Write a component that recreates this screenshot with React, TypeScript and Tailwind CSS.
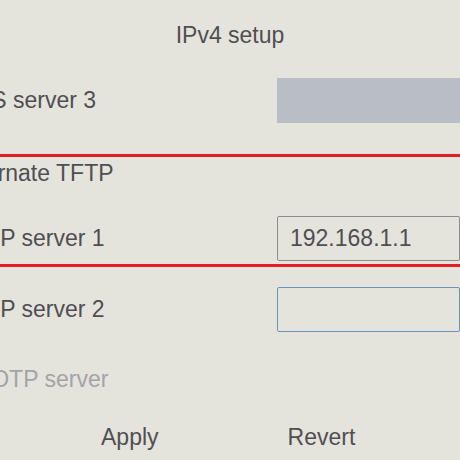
import React from "react";

const font = { fontFamily: '"Liberation Sans", Arial, sans-serif' };

function Row({
  label,
  muted,
  children,
  className,
}: {
  label: string;
  muted?: boolean;
  children?: React.ReactNode;
  className: string;
}) {
  return (
    <div className={`flex w-full items-center ${className}`}>
      <div
        className={`ml-[-42px] w-[319px] shrink-0 whitespace-nowrap text-[23px] ${
          muted ? "text-[#a3a3a8]" : "text-[#4f4f53]"
        }`}
      >
        {label}
      </div>
      {children}
    </div>
  );
}

function App() {
  return (
    <div
      className="flex h-[460px] w-[460px] flex-col overflow-hidden bg-[#e5e4dc]"
      style={font}
    >
      <div className="flex h-[70px] items-center justify-center pl-[-4px] text-[23px] text-[#4f4f53]">
        IPv4 setup
      </div>

      <Row label="DNS server 3" className="h-[60px]">
        <div className="h-[45px] flex-1 bg-[#b8bdc6]" />
      </Row>

      <div className="mt-[24px] h-[3px] w-full bg-[#e31d26]" />

      <Row label="Alternate TFTP" className="h-[33px]" />

      <Row label="TFTP server 1" className="mt-[25px] h-[46px]">
        <div className="flex h-[45px] flex-1 items-center rounded-[2px] border-[1.5px] border-[#8c8c8e] pl-[12px] text-[23px] text-[#4f4f53]">
          192.168.1.1
        </div>
      </Row>

      <div className="mt-[3px] h-[3px] w-full bg-[#e31d26]" />

      <Row label="TFTP server 2" className="mt-[19px] h-[46px]">
        <div className="h-[45px] flex-1 rounded-[2px] border-[1.5px] border-[#6b93b8]" />
      </Row>

      <Row label="BOOTP server" muted className="h-[94px]" />

      <div className="flex h-[22px] items-center text-[23px] text-[#4f4f53]">
        <span className="ml-[101px]">Apply</span>
        <span className="ml-[129px]">Revert</span>
      </div>
    </div>
  );
}

export default App;
